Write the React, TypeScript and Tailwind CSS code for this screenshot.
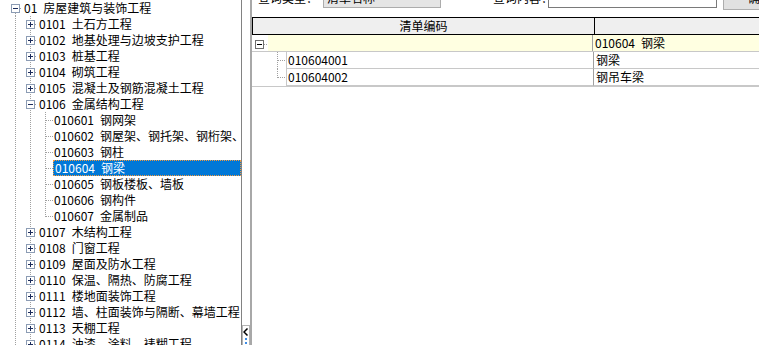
import React from 'react';

type Node = { code: string; name: string; level: 0 | 1 | 2; box?: 'plus' | 'minus'; last?: boolean; selected?: boolean };

const nodes: Node[] = [
  { code: '01', name: '房屋建筑与装饰工程', level: 0, box: 'minus' },
  { code: '0101', name: '土石方工程', level: 1, box: 'plus' },
  { code: '0102', name: '地基处理与边坡支护工程', level: 1, box: 'plus' },
  { code: '0103', name: '桩基工程', level: 1, box: 'plus' },
  { code: '0104', name: '砌筑工程', level: 1, box: 'plus' },
  { code: '0105', name: '混凝土及钢筋混凝土工程', level: 1, box: 'plus' },
  { code: '0106', name: '金属结构工程', level: 1, box: 'minus' },
  { code: '010601', name: '钢网架', level: 2 },
  { code: '010602', name: '钢屋架、钢托架、钢桁架、钢架桥', level: 2 },
  { code: '010603', name: '钢柱', level: 2 },
  { code: '010604', name: '钢梁', level: 2, selected: true },
  { code: '010605', name: '钢板楼板、墙板', level: 2 },
  { code: '010606', name: '钢构件', level: 2 },
  { code: '010607', name: '金属制品', level: 2, last: true },
  { code: '0107', name: '木结构工程', level: 1, box: 'plus' },
  { code: '0108', name: '门窗工程', level: 1, box: 'plus' },
  { code: '0109', name: '屋面及防水工程', level: 1, box: 'plus' },
  { code: '0110', name: '保温、隔热、防腐工程', level: 1, box: 'plus' },
  { code: '0111', name: '楼地面装饰工程', level: 1, box: 'plus' },
  { code: '0112', name: '墙、柱面装饰与隔断、幕墙工程', level: 1, box: 'plus' },
  { code: '0113', name: '天棚工程', level: 1, box: 'plus' },
  { code: '0114', name: '油漆、涂料、裱糊工程', level: 1, box: 'plus' },
];

const LINE = '#a0a0a0';
const dot = { stroke: LINE, strokeWidth: 1, strokeDasharray: '1 1', shapeRendering: 'crispEdges' as const };

const Box = ({ x, y, kind }: { x: number; y: number; kind: 'plus' | 'minus' }) => (
  <g shapeRendering="crispEdges">
    <rect x={x + 0.5} y={y + 0.5} width={8} height={8} fill="white" stroke="#8c9cb4" />
    <line x1={x + 2} y1={y + 4.5} x2={x + 7} y2={y + 4.5} stroke="#1c2c5c" />
    {kind === 'plus' && <line x1={x + 4.5} y1={y + 2} x2={x + 4.5} y2={y + 7} stroke="#1c2c5c" />}
  </g>
);

const Gutter = ({ n }: { n: Node }) => {
  const w = n.level === 0 ? 22 : n.level === 1 ? 37 : 53;
  return (
    <svg width={w} height={16} className="shrink-0">
      {n.level === 0 ? (
        <line x1={15.5} y1={13} x2={15.5} y2={16} {...dot} />
      ) : (
        <line x1={15.5} y1={0} x2={15.5} y2={16} {...dot} />
      )}
      {n.level >= 1 && <line x1={30.5} y1={0} x2={30.5} y2={16} {...dot} />}
      {n.level === 2 && <line x1={45.5} y1={0} x2={45.5} y2={n.last ? 9 : 16} {...dot} />}
      {n.level === 0 && <line x1={20} y1={8.5} x2={22} y2={8.5} {...dot} />}
      {n.level === 1 && <line x1={35} y1={8.5} x2={37} y2={8.5} {...dot} />}
      {n.level === 2 && <line x1={46} y1={8.5} x2={53} y2={8.5} {...dot} />}
      {n.box && <Box x={n.level === 0 ? 11 : 26} y={4} kind={n.box} />}
    </svg>
  );
};

const Tree = () => (
  <div className="w-[241px] h-full overflow-hidden bg-white border-r border-[#828282] shrink-0 box-content">
    {nodes.map((n) => (
      <div key={n.code} className="flex h-[16px] items-center whitespace-nowrap">
        <Gutter n={n} />
        <div
          className={
            n.selected
              ? 'flex-1 h-[16px] bg-[#0078d7] text-white border border-dotted border-[#f59a3c] pl-[1px] leading-[14px]'
              : `leading-[16px] text-black ${n.level === 2 ? 'pl-[1px]' : 'pl-[2px]'}`
          }
        >
          {n.code}
          <span className="ml-[6px]">{n.name}</span>
        </div>
      </div>
    ))}
  </div>
);

const Splitter = () => (
  <div className="w-[8px] h-full bg-white flex flex-col justify-end shrink-0">
    <div className="h-[22px] -mb-[2px] border border-[#b4b4b4] bg-white flex flex-col items-center pt-[2px]">
      <svg width="6" height="8" viewBox="0 0 6 8">
        <path d="M4.5 0.5 L1 4 L4.5 7.5" fill="none" stroke="#000" strokeWidth="1.5" />
      </svg>
      <div className="w-[2px] h-[2px] bg-[#3c8ce6] mt-[2px]" />
      <div className="w-[2px] h-[2px] bg-[#3c8ce6] mt-[2px]" />
    </div>
  </div>
);

const Grid = () => (
  <div className="mt-[7px]">
    <div className="flex h-[18px] border border-black border-r-0 bg-[#efefef]">
      <div className="w-[342px] border-r border-black flex items-center justify-center leading-[16px]">清单编码</div>
      <div className="flex-1" />
    </div>
    <div className="flex h-[17px] border-b border-[#c8c8c8]">
      <svg width="16" height="16" className="shrink-0">
        <g shapeRendering="crispEdges">
          <rect x={3.5} y={5.5} width={8} height={8} fill="white" stroke="#6e6e6e" />
          <line x1={5} y1={9.5} x2={10} y2={9.5} stroke="#000" />
        </g>
        <line x1={12} y1={9.5} x2={16} y2={9.5} {...dot} />
      </svg>
      <div className="w-[325px] bg-[#ffffe1] border-r border-[#a0a0a0]" />
      <div className="flex-1 bg-[#ffffe1] pl-[2px] leading-[16px]">
        010604<span className="ml-[6px]">钢梁</span>
      </div>
    </div>
    {[
      { code: '010604001', name: '钢梁', last: false },
      { code: '010604002', name: '钢吊车梁', last: true },
    ].map((r) => (
      <div key={r.code} className="flex h-[17px]">
        <svg width="34" height="17" className="shrink-0">
          <line x1={25.5} y1={0} x2={25.5} y2={r.last ? 9 : 17} {...dot} />
          <line x1={26} y1={8.5} x2={34} y2={8.5} {...dot} />
        </svg>
        <div className="w-[308px] border-l border-r border-b border-[#c8c8c8] border-r-[#a0a0a0] pl-[1px] leading-[16px]">{r.code}</div>
        <div className="flex-1 border-b border-[#c8c8c8] pl-[2px] leading-[16px]">{r.name}</div>
      </div>
    ))}
    <div className="h-[1px] bg-[#c8c8c8]" />
  </div>
);

export default function App() {
  return (
    <div
      className="w-[759px] h-[345px] overflow-hidden flex bg-white text-[12px] text-black"
      style={{ fontFamily: '"Noto Sans CJK SC", "Liberation Sans", sans-serif' }}
    >
      <Tree />
      <Splitter />
      <div className="w-[2px] h-full bg-[#a8a8a8] shrink-0" />
      <div className="flex-1 min-w-0 flex flex-col bg-white overflow-hidden">
        <div className="-mt-[14px] h-[24px] flex items-center whitespace-nowrap shrink-0">
          <span className="ml-[6px] w-[65px] shrink-0">查询类型：</span>
          <div className="w-[118px] h-[20px] shrink-0 bg-[#e5e5e5] border border-[#acacac] flex items-center pl-[3px] pr-[8px]">
            <span className="flex-1">清单名称</span>
            <svg width="8" height="5" viewBox="0 0 8 5">
              <path d="M0.5 0.5 L4 4 L7.5 0.5" fill="none" stroke="#555" />
            </svg>
          </div>
          <span className="ml-[52px] w-[55px] shrink-0">查询内容：</span>
          <div className="w-[169px] h-[20px] shrink-0 bg-white border border-[#7a7a7a]" />
          <div className="ml-[6px] w-[70px] h-[24px] shrink-0 bg-[#e1e1e1] border border-[#adadad] flex items-center pl-[24px]">确定</div>
        </div>
        <Grid />
      </div>
    </div>
  );
}
